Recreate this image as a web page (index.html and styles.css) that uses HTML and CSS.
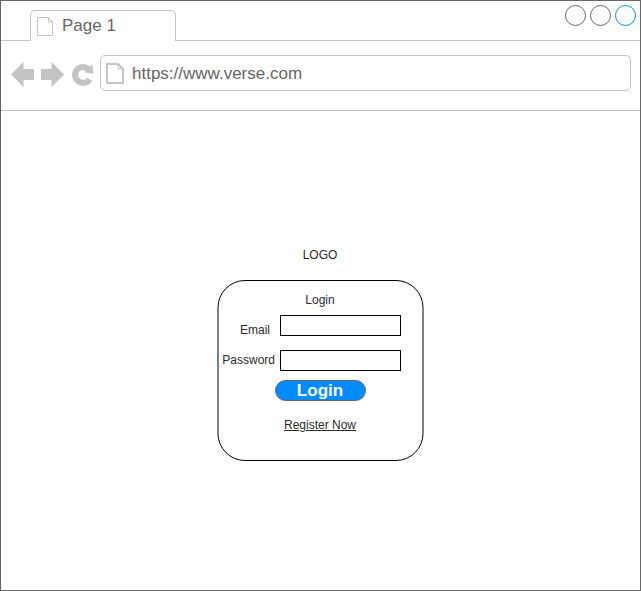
FILE: index.html
```html
<!DOCTYPE html>
<html lang="en">
<head>
<meta charset="utf-8">
<title>Page 1</title>
<link rel="stylesheet" href="styles.css">
</head>
<body>
<div class="window">
  <header class="tabbar">
    <div class="tab">
      <svg class="tab-icon" width="17" height="20" viewBox="0 0 17 20"><path d="M.5.5H11.500L15.500 4.500V18.500H.5Z M11.500.5V4.500H15.500" fill="#fff" stroke="#c4c4c4"/></svg>
      <span>Page 1</span>
    </div>
    <svg class="controls" width="72" height="22" viewBox="0 0 72 22" fill="#fff" stroke="#666">
      <circle cx="10.500" cy="10.500" r="10"/>
      <circle cx="35.500" cy="10.500" r="10"/>
      <circle cx="60.500" cy="10.500" r="10" stroke="#008cff"/>
    </svg>
  </header>
  <nav class="toolbar">
    <svg class="nav-icons" width="84" height="26" viewBox="11 61 84 26">
      <path d="M11 74.500L23.500 62V69H34V80H23.500V87Z M64 74.500L51.500 62V69H41V80H51.500V87Z" fill="#c4c4c4"/>
      <path d="M89.800 79.300A8 8 0 1 1 89 69.500" fill="none" stroke="#c4c4c4" stroke-width="6"/>
      <path d="M92.300 64.500L93.500 74L84.500 72.300Z" fill="#c4c4c4"/>
    </svg>
    <div class="address">
      <svg width="18" height="21" viewBox="0 0 18 21"><path d="M1 1H12L17 6V20H1Z" fill="#fff" stroke="#c4c4c4" stroke-width="2"/><path d="M12 1V6H17" fill="none" stroke="#c4c4c4"/></svg>
      <span>https://www.verse.com</span>
    </div>
  </nav>
  <main class="page">
    <div class="logo">LOGO</div>
    <form class="card">
      <svg class="card-outline" width="207" height="182" viewBox="0 0 207 182"><rect x="1" y=".5" width="205" height="180" rx="27" fill="none" stroke="#000"/></svg>
      <div class="title">Login</div>
      <div class="row"><label for="email">Email</label><input id="email" type="text"></div>
      <div class="row"><label for="password">Password</label><input id="password" type="password"></div>
      <button type="button">Login</button>
      <a class="register">Register Now</a>
    </form>
  </main>
</div>
</body>
</html>
```
FILE: styles.css
```css
* { box-sizing: border-box; }
body {
  margin: 0;
  font: 12px/14px "Liberation Sans", Arial, sans-serif;
  color: #2b2b2b;
  background: #fff;
}
.window {
  width: 641px;
  height: 591px;
  border: 1px solid #666;
  overflow: hidden;
}
.tabbar {
  display: flex;
  justify-content: space-between;
  height: 40px;
  padding: 0 4px 0 29px;
  border-bottom: 1px solid #c4c4c4;
}
.tab {
  display: flex;
  width: 146px;
  height: 31px;
  margin-top: 9px;
  padding: 5px 0 0 6px;
  border: 1px solid #c4c4c4;
  border-bottom: 0;
  border-radius: 5px 5px 0 0;
  background: #fff;
  color: #666;
  font-size: 17px;
  line-height: 20px;
}
.tab-icon { margin-top: 1px; }
.tab span { margin-left: 8px; }
.controls { margin-top: 4px; margin-right: -1px; }
.toolbar {
  display: flex;
  height: 70px;
  padding: 14px 9px 0 10px;
  border-bottom: 1px solid #c4c4c4;
}
.nav-icons { flex: none; margin-top: 6px; }
.address {
  display: flex;
  flex: 1;
  height: 36px;
  margin-left: 5px;
  padding: 7px 0 0 5px;
  border: 1px solid #c4c4c4;
  border-radius: 5px;
  color: #666;
  font-size: 17px;
  line-height: 20px;
}
.address span { margin: 1px 0 0 8px; }
.page {
  display: flex;
  flex-direction: column;
  align-items: center;
  padding-top: 137px;
}
.logo { height: 32px; padding-right: 1px; }
.card {
  position: relative;
  display: flex;
  flex-direction: column;
  width: 207px;
  height: 182px;
  padding-top: 13px;
}
.card-outline { position: absolute; left: 0; top: 0; pointer-events: none; }
.title { height: 22px; padding-right: 1px; text-align: center; }
.row {
  display: grid;
  grid-template-columns: 63px 121px;
  height: 35px;
}
.row label { padding-top: 8px; padding-right: 10px; text-align: right; }
.row:nth-of-type(3) label { padding-top: 3px; padding-right: 5px; }
.row input {
  height: 21px;
  padding: 0 4px;
  border: 1px solid #000;
  border-radius: 0;
  background: #fff;
}
button {
  width: 91px;
  height: 21px;
  margin: -5px 0 0 58px;
  padding: 0 1px 0 0;
  border: 1px solid #666;
  border-radius: 11px;
  background: #008cff;
  color: #fff;
  font: bold 17px/19px "Liberation Sans", Arial, sans-serif;
}
.register {
  align-self: center;
  margin-top: 17px;
  padding-right: 1px;
  text-decoration: underline;
}
```
